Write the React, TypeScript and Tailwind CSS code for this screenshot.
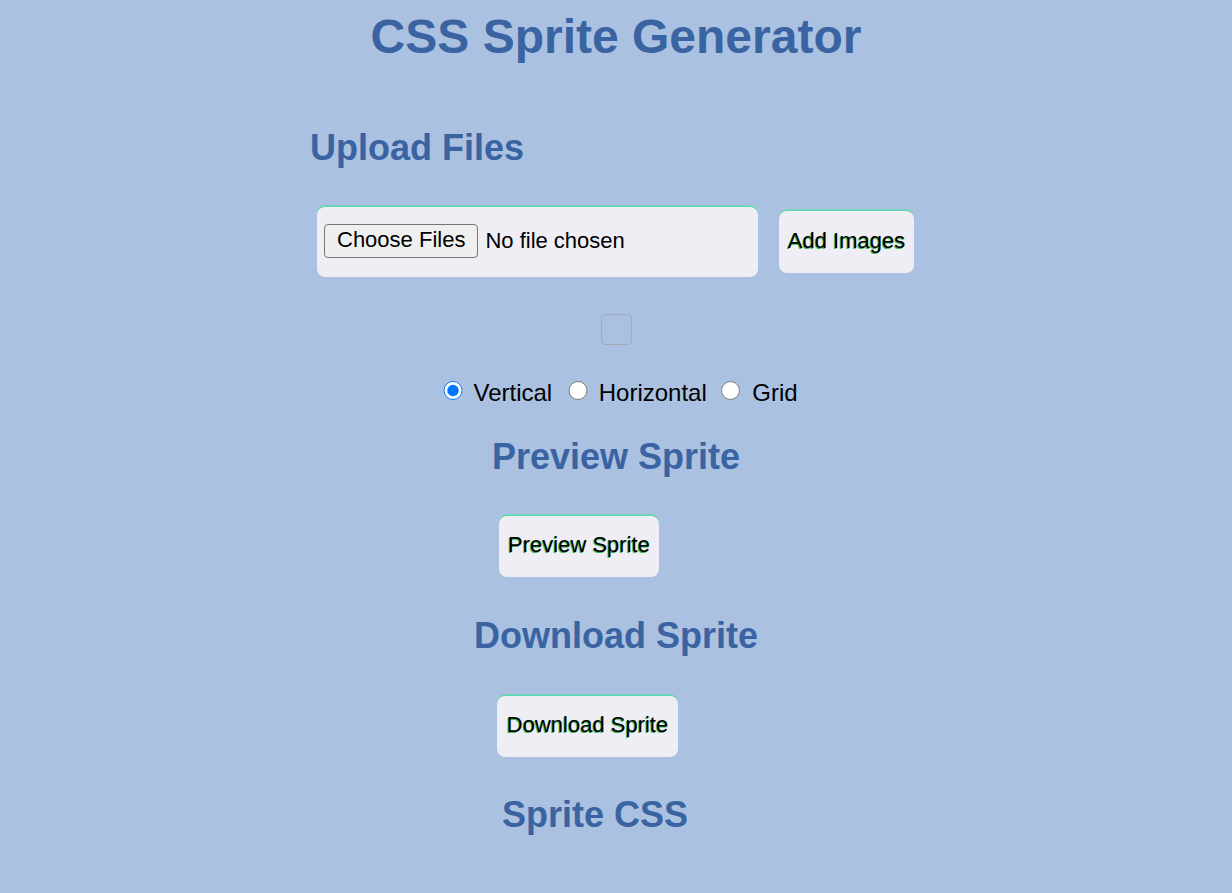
import React, { useState } from "react";

export default function App() {
  const [layout, setLayout] = useState("vertical");
  const btn =
    "flex items-center justify-center rounded-[8px] bg-[#eeeef4] pb-[4px] text-[22px] leading-[25px] text-black shadow-[0_-1.5px_0_#5ad9ab] [text-shadow:-1px_1px_0_#34b35a]";
  return (
    <div
      className="min-h-screen w-full bg-[#abc1e1] pb-[40px]"
      style={{ fontFamily: '"Liberation Sans", Arial, sans-serif' }}
    >
      <h1 className="pt-[9px] text-center text-[48px] font-bold leading-[55.2px] text-[#3a64a1]">
        CSS Sprite Generator
      </h1>

      <h2 className="ml-[310px] mt-[63px] text-[36px] font-bold leading-[41.4px] text-[#3a64a1]">
        Upload Files
      </h2>

      <div className="ml-[317px] mt-[38.6px] flex items-center gap-[21px]">
        <label className="flex h-[70px] w-[441px] items-center rounded-[8px] bg-[#eeeef4] pb-[2px] pl-[7px] shadow-[0_-1.5px_0_#5ad9ab]">
          <input type="file" multiple className="sr-only" />
          <span className="flex h-[34px] items-center rounded-[4px] border-[1.5px] border-[#767676] bg-[#efefef] px-[12px] pb-[3px] text-[22px] leading-[25px] text-black">
            Choose Files
          </span>
          <span className="ml-[7px] pb-[2px] text-[22px] leading-[25px] text-black">No file chosen</span>
        </label>
        <button className={`${btn} h-[62px] w-[135px]`}>Add Images</button>
      </div>

      <div className="mx-auto mt-[37px] h-[31px] w-[31px] rounded-[4px] border-[1.5px] border-[#a2abb8]" />

      <div className="ml-[443px] mt-[33.5px] flex h-[27.6px] items-start text-[24px] leading-[27.6px] text-black">
        <input
          type="radio"
          name="layout"
          checked={layout === "vertical"}
          onChange={() => setLayout("vertical")}
          className="m-0 mt-[2px] h-[19.5px] w-[19.5px]"
        />
        <span className="ml-[11px]">Vertical</span>
        <input
          type="radio"
          name="layout"
          checked={layout === "horizontal"}
          onChange={() => setLayout("horizontal")}
          className="m-0 ml-[16px] mt-[2px] h-[19.5px] w-[19.5px]"
        />
        <span className="ml-[11px]">Horizontal</span>
        <input
          type="radio"
          name="layout"
          checked={layout === "grid"}
          onChange={() => setLayout("grid")}
          className="m-0 ml-[14px] mt-[2px] h-[19.5px] w-[19.5px]"
        />
        <span className="ml-[12px]">Grid</span>
      </div>

      <h2 className="mt-[30px] text-center text-[36px] font-bold leading-[41.4px] text-[#3a64a1]">
        Preview Sprite
      </h2>

      <button className={`${btn} ml-[499px] mt-[38.5px] h-[61px] w-[160px]`}>Preview Sprite</button>

      <h2 className="mt-[38px] text-center text-[36px] font-bold leading-[41.4px] text-[#3a64a1]">
        Download Sprite
      </h2>

      <button className={`${btn} ml-[497px] mt-[39px] h-[61px] w-[181px]`}>Download Sprite</button>

      <h2 className="ml-[502px] mt-[37px] text-[36px] font-bold leading-[41.4px] text-[#3a64a1]">
        Sprite CSS
      </h2>
    </div>
  );
}
